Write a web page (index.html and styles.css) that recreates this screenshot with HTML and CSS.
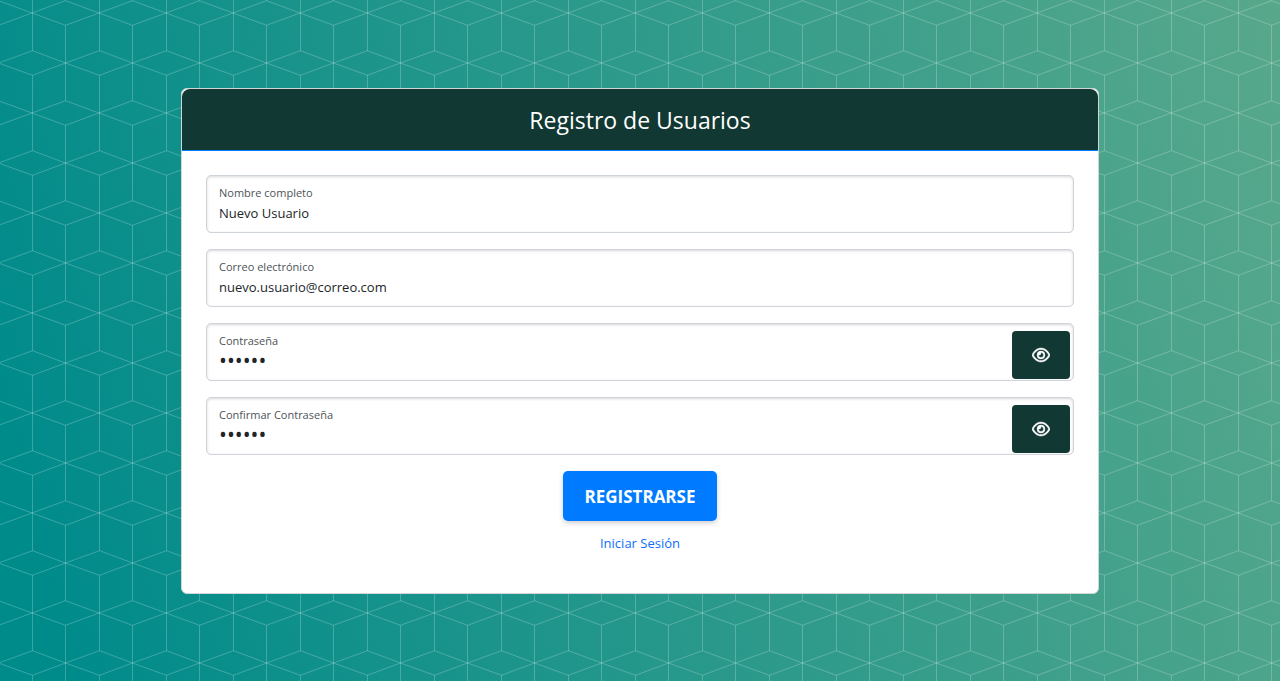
FILE: index.html
```html
<!DOCTYPE html>
<html lang="es">
<head>
<meta charset="utf-8">
<meta name="viewport" content="width=device-width, initial-scale=1">
<title>Registro de Usuarios</title>
<link rel="stylesheet" href="styles.css">
</head>
<body>
<main class="card">
  <header class="card-header"><h1 class="card-title">Registro de Usuarios</h1></header>
  <form class="card-body">
    <div class="field">
      <input class="field-input" type="text" id="nombre" value="Nuevo Usuario">
      <label class="field-label" for="nombre">Nombre completo</label>
    </div>
    <div class="field">
      <input class="field-input" type="email" id="correo" value="nuevo.usuario@correo.com">
      <label class="field-label" for="correo">Correo electrónico</label>
    </div>
    <div class="field">
      <input class="field-input field-password" type="password" id="clave" value="123456">
      <label class="field-label" for="clave">Contraseña</label>
      <button class="reveal" type="button" aria-label="Mostrar contraseña">
        <svg class="eye" viewBox="0 0 576 512" aria-hidden="true"><path d="M288 80c-65 0-118 30-159 67-39 36-66 78-80 109 14 31 41 73 80 109 41 37 94 67 159 67s118-30 159-67c39-36 66-78 80-109-14-31-41-73-80-109-41-37-94-67-159-67zM95 113C143 68 208 32 288 32s145 36 193 81c46 43 78 95 93 131 3 8 3 16 0 24-15 36-47 88-93 131-48 45-113 81-193 81s-145-36-193-81C49 356 17 304 2 268c-3-8-3-16 0-24 15-36 47-88 93-131zM288 336a80 80 0 0 0 80-80 80 80 0 0 0-80-80h-2c1 5 2 11 2 16a64 64 0 0 1-80 62v2a80 80 0 0 0 80 80zm0-208a128 128 0 1 1 0 256 128 128 0 1 1 0-256z"/></svg>
      </button>
    </div>
    <div class="field">
      <input class="field-input field-password" type="password" id="confirmar" value="123456">
      <label class="field-label" for="confirmar">Confirmar Contraseña</label>
      <button class="reveal" type="button" aria-label="Mostrar confirmación">
        <svg class="eye" viewBox="0 0 576 512" aria-hidden="true"><path d="M288 80c-65 0-118 30-159 67-39 36-66 78-80 109 14 31 41 73 80 109 41 37 94 67 159 67s118-30 159-67c39-36 66-78 80-109-14-31-41-73-80-109-41-37-94-67-159-67zM95 113C143 68 208 32 288 32s145 36 193 81c46 43 78 95 93 131 3 8 3 16 0 24-15 36-47 88-93 131-48 45-113 81-193 81s-145-36-193-81C49 356 17 304 2 268c-3-8-3-16 0-24 15-36 47-88 93-131zM288 336a80 80 0 0 0 80-80 80 80 0 0 0-80-80h-2c1 5 2 11 2 16a64 64 0 0 1-80 62v2a80 80 0 0 0 80 80zm0-208a128 128 0 1 1 0 256 128 128 0 1 1 0-256z"/></svg>
      </button>
    </div>
    <div class="actions">
      <button class="submit" type="submit">REGISTRARSE</button>
      <a class="login-link" href="#">Iniciar Sesión</a>
    </div>
  </form>
</main>
</body>
</html>
```
FILE: styles.css
```css
* { box-sizing: border-box; }

body {
  margin: 0;
  min-height: 100vh;
  display: flex;
  align-items: center;
  justify-content: center;
  padding: 16px;
  font-family: "Segoe UI", "Open Sans", "Noto Sans", sans-serif;
  font-size: 13px;
  line-height: 20px;
  color: #212529;
  background-image:
    url("data:image/svg+xml,%3Csvg xmlns='http://www.w3.org/2000/svg' width='67' height='100'%3E%3Cpath fill='none' stroke='%23fff' stroke-opacity='.22' d='M-1.500 .7L65.500 25.300L98.500 13M-1.500 25.300L65.500 .7L98.500 13M-1.500 63L32.500 50.700L98.500 75.300M-1.500 63L32.500 75.300L98.500 50.700M32.500 0V50.700M32.500 75.300V100M65.500 25.300V100M65.500 0V.7'/%3E%3C/svg%3E"),
    linear-gradient(75deg, #008b8b 5%, #58a88b);
}

.card {
  width: 100%;
  max-width: 918px;
  background: #fff;
  border: 1px solid #d2d6d6;
  border-radius: 6px;
}

.card-header {
  padding: 17px 16px 15px;
  background: #113832;
  border-bottom: 1px solid #007bff;
  border-radius: 8px 8px 0 0;
  text-align: center;
}

.card-title {
  margin: 0;
  font-size: 23px;
  font-weight: 400;
  line-height: 29px;
  color: #fff;
}

.card-body {
  display: flex;
  flex-direction: column;
  gap: 16px;
  padding: 24px 24px 40px;
}

.field { position: relative; }

.field-input {
  display: block;
  width: 100%;
  height: 58px;
  padding: 26px 12px 8px;
  border: 1px solid #ced4da;
  border-radius: 5px;
  background: #fff;
  box-shadow: inset 0 1px 3px rgba(0, 0, 0, .16);
  font: inherit;
  color: inherit;
}

.field-password {
  padding: 24px 72px 8px 12px;
  font-size: 21px;
}

.field-label {
  position: absolute;
  top: 8px;
  left: 13px;
  font-size: 11px;
  color: #4d5358;
}

.reveal {
  position: absolute;
  top: 8px;
  right: 4px;
  display: flex;
  align-items: center;
  justify-content: center;
  width: 58px;
  height: 48px;
  padding: 0;
  border: 0;
  border-radius: 4px;
  background: #113832;
}

.eye { width: 18px; height: 16px; fill: #fff; stroke: #fff; stroke-width: 14px; }

.actions {
  display: flex;
  flex-direction: column;
  align-items: center;
  gap: 12px;
}

.submit {
  padding: 16px 22px 14px;
  border: 0;
  border-radius: 5px;
  background: #007bff;
  box-shadow: 0 2px 5px rgba(0, 0, 0, .2);
  font: inherit;
  font-size: 17px;
  font-weight: 700;
  color: #fff;
}

.login-link { color: #0d6efd; text-decoration: none; }
```
